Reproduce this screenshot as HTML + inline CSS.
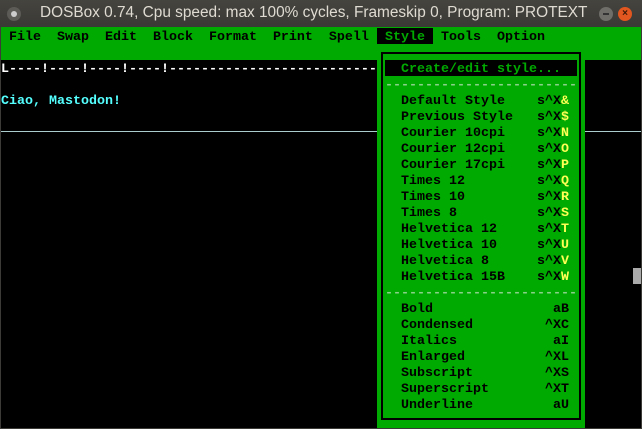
<!DOCTYPE html>
<html><head><meta charset="utf-8"><style>
*{margin:0;padding:0}
body{width:642px;height:429px;background:#3c3b37;overflow:hidden;position:relative;font-family:"Liberation Mono",monospace;}
#title{position:absolute;left:0;top:0;width:642px;height:27px;background:linear-gradient(#45443f,#3a3935);}
#title span{position:absolute;left:40px;top:4px;font:15.4px "Liberation Sans",sans-serif;color:#dfdbd2;}
.btn{position:absolute;top:7px;width:14px;height:14px;border-radius:50%}
#scr{position:absolute;left:1px;top:27px;width:640px;height:401px;background:#000;overflow:hidden}
.r{position:absolute;height:16px;line-height:16px;font-size:13.33px;font-weight:bold;white-space:pre;}
.t{margin-top:2px}
.g{color:#000}
.y{color:#ffff55}
</style></head><body>
<div id="title">
<div class="btn" style="left:7px;background:#5c5b56;"><div style="position:absolute;left:4px;top:4px;width:6px;height:6px;border-radius:50%;background:#ccc"></div></div>
<span>DOSBox 0.74, Cpu speed: max 100% cycles, Frameskip  0, Program:  PROTEXT</span>
<div class="btn" style="left:599px;background:#6f6e69;"><div style="position:absolute;left:4px;top:6px;width:6px;height:2px;background:#333"></div></div>
<div class="btn" style="left:618px;background:#e2561f;color:#3a1a0a;font:bold 10px 'Liberation Sans';text-align:center;line-height:14px">×</div>
</div>
<div id="scr">
<div style="position:absolute;left:0;top:0;width:640px;height:33px;background:#00aa00"></div>
<div style="position:absolute;left:376px;top:1px;width:56px;height:16px;background:#000"></div>
<div class="r g t" style="left:0;top:1px"> File  Swap  Edit  Block  Format  Print  Spell</div>
<div class="r t" style="left:384px;top:1px;color:#00aa00">Style</div>
<div class="r g t" style="left:440px;top:1px">Tools  Option</div>
<div class="r t" style="left:0;top:33px;color:#fff">L----!----!----!----!-------------------------------------</div>
<div class="r t" style="left:0;top:65px;color:#55ffff">Ciao, Mastodon!</div>
<div style="position:absolute;left:0;top:104px;width:640px;height:1px;background:#aacccc"></div>
<div style="position:absolute;left:632px;top:241px;width:8px;height:16px;background:#aaa"></div>
<div style="position:absolute;left:376px;top:24px;width:208px;height:377px;background:#00aa00"></div>
<div style="position:absolute;left:380px;top:25px;width:196px;height:364px;border:2px solid #000"></div>
<div style="position:absolute;left:384px;top:33px;width:192px;height:16px;background:#000"></div>
<div class="r t" style="left:400px;top:33px;color:#00aa00">Create/edit style...</div>
<div class="r t" style="left:384px;top:49px;color:#8bd08b">------------------------</div>
<div class="r g t" style="left:400px;top:65px">Default Style    s^X<span class="y">&amp;</span>
Previous Style   s^X<span class="y">$</span>
Courier 10cpi    s^X<span class="y">N</span>
Courier 12cpi    s^X<span class="y">O</span>
Courier 17cpi    s^X<span class="y">P</span>
Times 12         s^X<span class="y">Q</span>
Times 10         s^X<span class="y">R</span>
Times 8          s^X<span class="y">S</span>
Helvetica 12     s^X<span class="y">T</span>
Helvetica 10     s^X<span class="y">U</span>
Helvetica 8      s^X<span class="y">V</span>
Helvetica 15B    s^X<span class="y">W</span></div>
<div class="r t" style="left:384px;top:257px;color:#8bd08b">------------------------</div>
<div class="r g t" style="left:400px;top:273px">Bold               aB
Condensed         ^XC
Italics            aI
Enlarged          ^XL
Subscript         ^XS
Superscript       ^XT
Underline          aU</div>
</div>
</body></html>
